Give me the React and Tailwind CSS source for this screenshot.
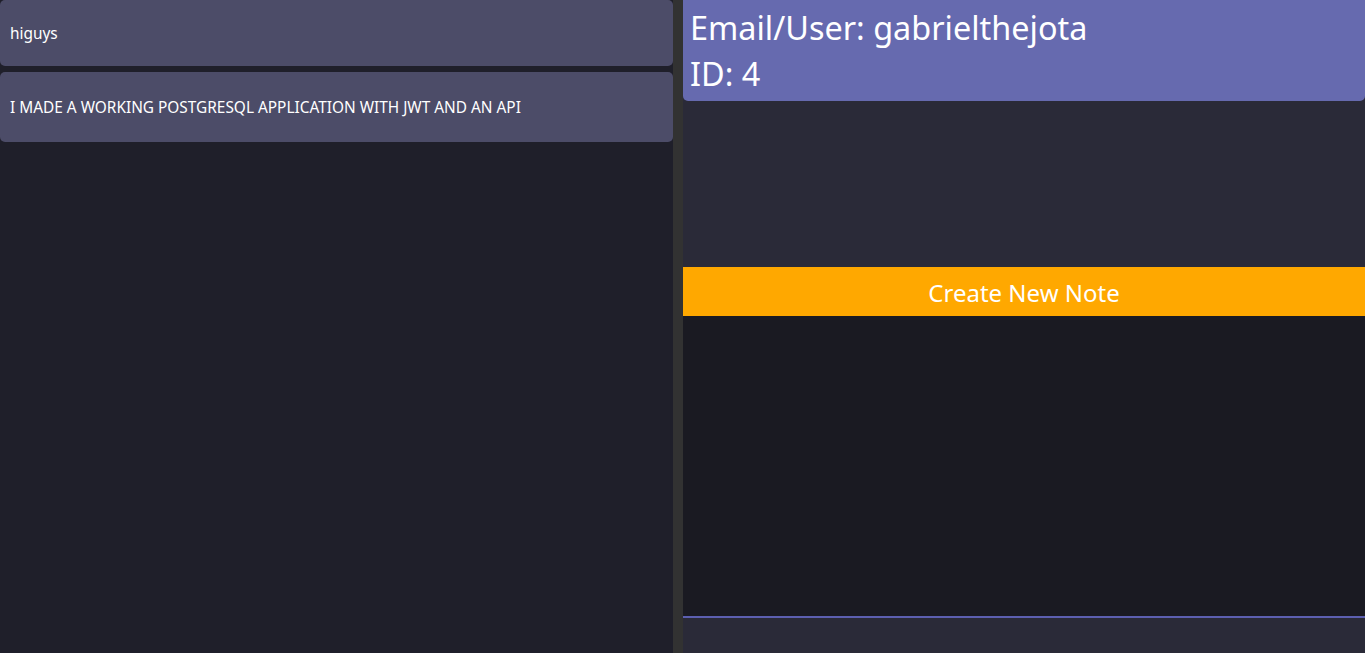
import React from 'react'

const notes = [
  { id: 1, text: 'higuys', h: 'h-[66px]' },
  { id: 2, text: 'I MADE A WORKING POSTGRESQL APPLICATION WITH JWT AND AN API', h: 'h-[70px]' },
]

export default function App() {
  return (
    <div className="flex h-[653px] w-full overflow-hidden bg-[#1f1f2a] font-['Noto_Sans',sans-serif] text-white">
      {/* Notas */}
      <div className="flex w-[673px] flex-col gap-[6px]">
        {notes.map((note) => (
          <div
            key={note.id}
            className={`flex ${note.h} items-center rounded-[5px] bg-[#4c4c68] px-[10px] pt-[2px] text-[15.4px]`}
          >
            {note.text}
          </div>
        ))}
      </div>

      {/* Divisor */}
      <div className="w-[10px] bg-[#323232]" />

      {/* Painel do usuário */}
      <div className="flex flex-1 flex-col bg-[#2a2a38]">
        <div className="h-[101px] rounded-b-[5px] bg-[#666aaf] px-[7px] pt-[4px] text-[32.4px] leading-[46px]">
          <p>Email/User: gabrielthejota</p>
          <p>ID: 4</p>
        </div>
        <div className="h-[166px]" />
        <button className="h-[49px] w-full bg-[#ffa800] pt-[3px] text-[24px] text-white">Create New Note</button>
        <div className="h-[302px] border-b-2 border-[#5c5fb0] bg-[#1a1a22]" />
        <div className="flex-1" />
      </div>
    </div>
  )
}
